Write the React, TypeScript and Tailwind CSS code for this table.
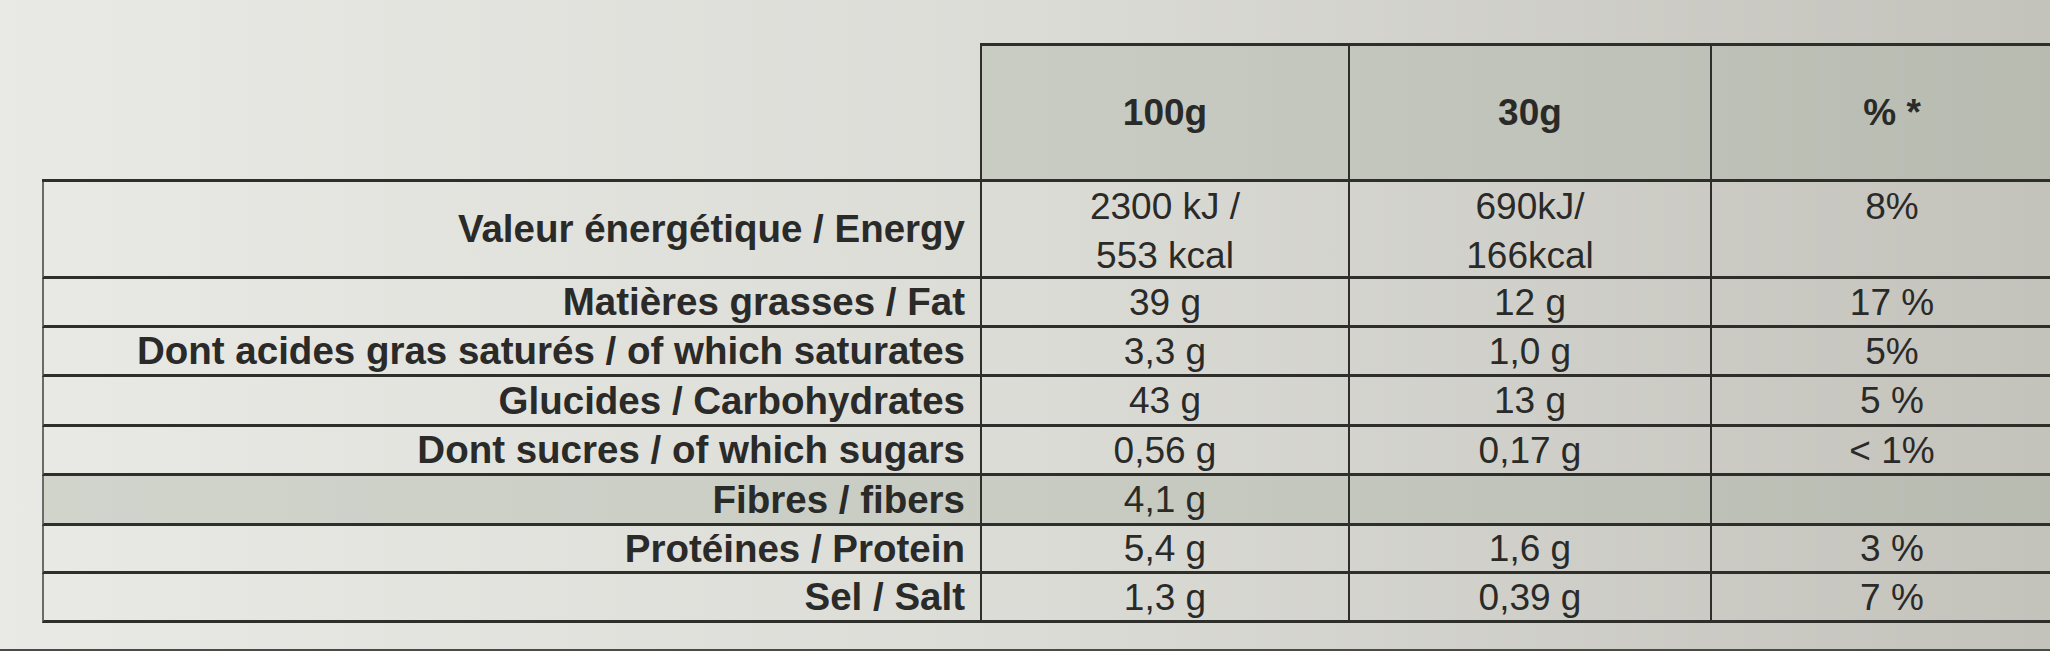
type Row = {
  label: string;
  values: string[][];
  tall?: boolean;
  shaded?: boolean;
};

const rows: Row[] = [
  {
    label: "Valeur énergétique / Energy",
    values: [["2300 kJ /", "553 kcal"], ["690kJ/", "166kcal"], ["8%"]],
    tall: true,
  },
  { label: "Matières grasses / Fat", values: [["39 g"], ["12 g"], ["17 %"]] },
  { label: "Dont acides gras saturés / of which saturates", values: [["3,3 g"], ["1,0 g"], ["5%"]] },
  { label: "Glucides / Carbohydrates", values: [["43 g"], ["13 g"], ["5 %"]] },
  { label: "Dont sucres / of which sugars", values: [["0,56 g"], ["0,17 g"], ["< 1%"]] },
  { label: "Fibres / fibers", values: [["4,1 g"], [], []], shaded: true },
  { label: "Protéines / Protein", values: [["5,4 g"], ["1,6 g"], ["3 %"]] },
  { label: "Sel / Salt", values: [["1,3 g"], ["0,39 g"], ["7 %"]] },
];

const headers = ["100g", "30g", "% *"];

export default function App() {
  return (
    <div className="flex h-[651px] w-[2050px] flex-col overflow-hidden bg-linear-to-r from-[#e9e9e5] via-[#dcdcd7] to-[#c3c2bb] font-['Liberation_Sans',Arial,sans-serif] text-[#2a2a28]">
      <div className="pt-[43px] pl-[42px]">
        <div className="grid w-[2032px] grid-cols-[940px_368px_362px_362px] grid-rows-[139px_97px_49px_49px_50px_49px_50px_48px_49px]">
          {/* empty corner */}
          <div className="border-r-2 border-b-[3px] border-[#2e2e2b]" />
          {headers.map((h) => (
            <div
              key={h}
              className="flex items-center justify-center border-t-[3px] border-r-2 border-b-[3px] border-[#2e2e2b] bg-[#a2ae9f]/35 text-[37px] font-bold"
            >
              {h}
            </div>
          ))}

          {rows.map((row) => (
            <Cells key={row.label} row={row} />
          ))}
        </div>
      </div>
      <div className="flex-1" />
      <div className="h-[2px] bg-[#4a4a46]" />
    </div>
  );
}

function Cells({ row }: { row: Row }) {
  const shade = row.shaded ? "bg-[#a2ae9f]/35" : "";
  return (
    <>
      <div
        className={`flex items-center justify-end border-r-2 border-b-[3px] border-l-2 border-[#2e2e2b] border-l-[#6a6a6a] pr-[15px] text-[38.5px] font-bold ${shade}`}
      >
        {row.label}
      </div>
      {row.values.map((lines, i) => (
        <div
          key={i}
          className={`flex flex-col items-center border-r-2 border-b-[3px] border-[#2e2e2b] text-[37px] ${
            row.tall ? "justify-start leading-[49px]" : "justify-center leading-none"
          } ${shade}`}
        >
          {lines.map((l) => (
            <span key={l}>{l}</span>
          ))}
        </div>
      ))}
    </>
  );
}
